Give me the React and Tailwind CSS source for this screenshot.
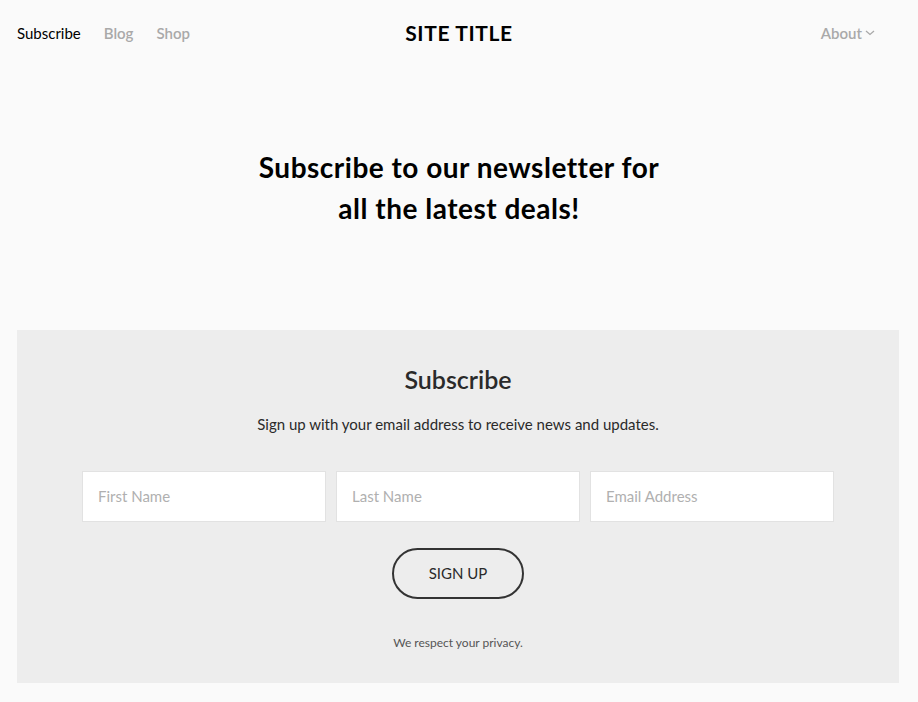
import React from "react";

const font = { fontFamily: "Lato, 'Noto Sans', sans-serif" };

const Header = () => (
  <header className="flex items-center justify-between h-[66px] px-[17px] relative">
    <nav className="flex items-center gap-[23px] text-[15px]">
      <a className="text-black">Subscribe</a>
      <a className="text-[#a9a9a9] font-semibold">Blog</a>
      <a className="text-[#a9a9a9] font-semibold">Shop</a>
    </nav>
    <div className="absolute left-1/2 -translate-x-1/2 text-[21px] font-bold tracking-[0.03em] text-black">
      SITE TITLE
    </div>
    <div className="flex items-center gap-[3px] mr-[26px] text-[15px] font-semibold text-[#a9a9a9]">
      About
      <svg width="10" height="6" viewBox="0 0 10 6" fill="none">
        <path d="M1 1l4 3.5L9 1" stroke="#a9a9a9" strokeWidth="1.3" />
      </svg>
    </div>
  </header>
);

const Field = ({ placeholder }) => (
  <input
    type="text"
    placeholder={placeholder}
    className="w-[244px] h-[51px] bg-white border border-[#e2e2e2] px-[15px] text-[15px] placeholder:text-[#b0b0b0] outline-none"
  />
);

export default function App() {
  return (
    <div className="min-h-[702px] bg-[#fafafa] text-[#222]" style={font}>
      <Header />
      <section className="flex justify-center pt-[81px] pb-[101px]">
        <h1 className="text-center text-[28px] tracking-[0.5px] leading-[41px] font-bold text-black">
          Subscribe to our newsletter for
          <br />
          all the latest deals!
        </h1>
      </section>
      <section className="mx-[17px] w-[882px] h-[353px] bg-[#ededed] flex flex-col items-center pt-[32px]">
        <h2 className="text-[25px] font-semibold text-[#2a2a2a] leading-[34px]">Subscribe</h2>
        <p className="mt-[17px] text-[15px] text-[#2a2a2a]">
          Sign up with your email address to receive news and updates.
        </p>
        <div className="flex gap-[10px] mt-[35px]">
          <Field placeholder="First Name" />
          <Field placeholder="Last Name" />
          <Field placeholder="Email Address" />
        </div>
        <button className="mt-[26px] w-[132px] h-[51px] rounded-full border-2 border-[#333] text-[15px] text-[#2a2a2a]">
          SIGN UP
        </button>
        <p className="mt-[35px] text-[12px] text-[#555]">We respect your privacy.</p>
      </section>
    </div>
  );
}
